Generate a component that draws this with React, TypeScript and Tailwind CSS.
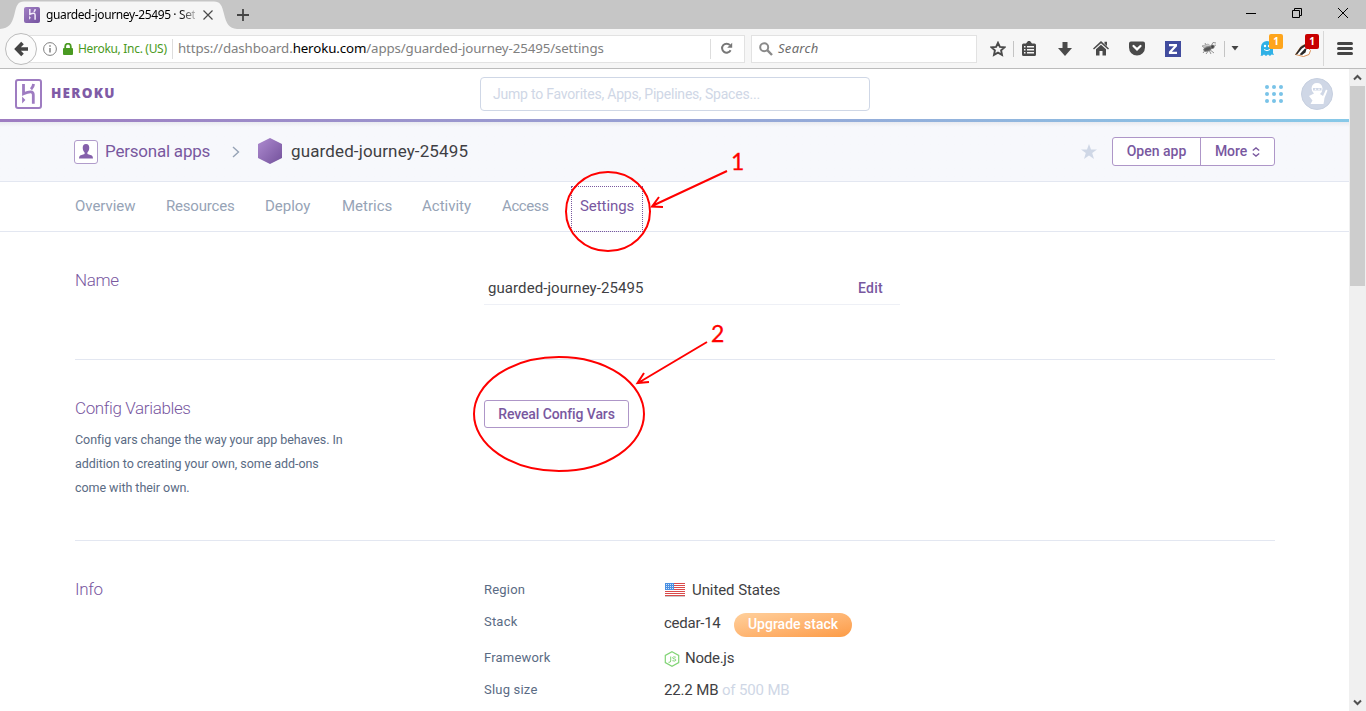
import React from "react";

const UI = "font-['Noto_Sans',sans-serif]";

function HerokuMark({ className = "", stroke = "#9e7cc1", framed = true }: { className?: string; stroke?: string; framed?: boolean }) {
  return (
    <svg viewBox={framed ? "0 0 27 30" : "4 3 19 24"} className={className} fill="none">
      {framed && <rect x="1" y="1" width="25" height="28" rx="2" stroke={stroke} strokeWidth="2" />}
      <path d="M8.500 5v9.800c3-1.300 5.300-2 7.300-1.900 2 .1 2.500 1.400 2.500 2.900V24.700M18.600 5c-.2 2.200-1.100 3.700-2.600 5.200" stroke={stroke} strokeWidth="2.800" />
      <path d="M7.100 17.500v7l3.300-3.500z" fill={stroke} />
    </svg>
  );
}

function TabStrip() {
  return (
    <div className={`relative flex h-[29px] bg-[#c6c6c6] ${UI}`}>
      <svg className="absolute left-0 top-0" width="240" height="29" viewBox="0 0 240 29">
        <path d="M0 29C9 28 12 24 14.500 14C16.500 5 18 1.500 24 1.500H214C220 1.500 222 5 224 14C226.500 24 229 28 237 29Z" fill="#f6f6f6" />
      </svg>
      <div className="relative flex h-full w-[232px] items-center pl-6">
        <div className="flex size-4 shrink-0 items-center justify-center rounded-[2px] bg-gradient-to-br from-[#a17fc3] to-[#7553a0]">
          <HerokuMark framed={false} className="h-[13px] w-[11px]" stroke="#f1e9f9" />
        </div>
        <div className="ml-[6px] w-[149px] whitespace-nowrap bg-gradient-to-r from-black from-88% to-[#bbb] bg-clip-text text-[12px] tracking-[-0.38px] text-transparent">
          guarded-journey-25495 · Set
        </div>
        <svg className="ml-[7px]" width="12" height="12" viewBox="0 0 12 12">
          <path d="M1.500 1.500l9 9M10.500 1.500l-9 9" stroke="#4a4a4a" strokeWidth="1.200" />
        </svg>
      </div>
      <svg className="relative mt-[9px] ml-[5px]" width="12" height="12" viewBox="0 0 12 12">
        <path d="M6 0v12M0 6h12" stroke="#444" strokeWidth="1.800" />
      </svg>
      <div className="ml-auto mr-[18px] flex items-center gap-[36px] pb-[3px]">
        <svg width="10" height="10"><path d="M0 5.500h10" stroke="#000" /></svg>
        <svg width="10" height="10" fill="none" stroke="#000"><path d="M.5 2.500h7v7h-7zM2.500 2.500v-2h7v7h-2" /></svg>
        <svg width="10" height="10" stroke="#000"><path d="M0 0l10 10M10 0L0 10" /></svg>
      </div>
    </div>
  );
}

function Cell({ children, w = "w-9" }: { children: React.ReactNode; w?: string }) {
  return <div className={`relative flex h-full shrink-0 items-center justify-center ${w}`}>{children}</div>;
}

function Toolbar() {
  return (
    <div className={`flex h-10 items-center border-b border-[#bcbcbc] bg-[#f6f6f6] ${UI}`}>
      <div className="z-10 ml-[5px] -mr-4 flex size-8 shrink-0 items-center justify-center rounded-full border border-[#bcbcbc] bg-[#fbfbfb]">
        <svg width="15" height="16" viewBox="0 0 15 16" fill="none" stroke="#444" strokeWidth="3.600">
          <path d="M14 8H3M8.500 2L2.700 8l5.800 6" />
        </svg>
      </div>
      <div className="flex h-7 w-[724px] shrink-0 items-center border border-[#e2e2e2] bg-white pl-[21px]">
        <svg width="14" height="14" viewBox="0 0 14 14" fill="none" stroke="#808080">
          <circle cx="7" cy="7" r="6.400" />
          <path d="M7 6v4.500M7 3.200v1.600" strokeWidth="1.500" />
        </svg>
        <svg className="ml-[6px]" width="10" height="12" viewBox="0 0 10 12">
          <path d="M2.200 6V3.500a2.800 2.800 0 015.600 0V6" fill="none" stroke="#4a9a22" strokeWidth="1.800" />
          <rect y="5" width="10" height="7" rx="1" fill="#4a9a22" />
        </svg>
        <span className="ml-[5px] w-[89px] whitespace-nowrap text-[12px] tracking-[-0.31px] text-[#4a9a22]">Heroku, Inc. (US)</span>
        <span className="ml-[5px] h-5 w-px bg-[#ddd]" />
        <span className="ml-[5px] whitespace-nowrap text-[13.300px] tracking-[-0.115px] text-[#808080]">
          https://dashboard.<span className="text-black">heroku.com</span>/apps/guarded-journey-25495/settings
        </span>
        <span className="ml-auto h-5 w-px bg-[#ddd]" />
        <svg className="ml-[9px] mr-[11px]" width="13" height="13" viewBox="0 0 13 13" fill="none">
          <path d="M10.600 8.200A4.500 4.500 0 1110 3.200" stroke="#777" strokeWidth="2" />
          <path d="M12.200.8v5H7.200z" fill="#777" />
        </svg>
      </div>
      <div className="ml-[6px] flex h-7 w-[226px] shrink-0 items-center border border-[#e2e2e2] bg-white pl-[7px]">
        <svg width="14" height="14" viewBox="0 0 14 14" fill="none" stroke="#8a8a8a">
          <circle cx="5.200" cy="5.200" r="4" strokeWidth="2" />
          <path d="M8.200 8.200l4.800 4.800" strokeWidth="2.400" />
        </svg>
        <span className="ml-[5px] mt-px text-[13px] italic tracking-[0.300px] text-[#6c6c6c]">Search</span>
      </div>
      <Cell w="ml-[3px] w-9">
        <svg width="16" height="16" viewBox="0 0 16 16" fill="none" stroke="#4a4a4a" strokeWidth="1.900">
          <path d="M8 1.800l1.900 4.100 4.500.5-3.300 3 .9 4.500L8 11.700l-4 2.200.9-4.500-3.300-3 4.500-.5z" />
        </svg>
        <span className="absolute right-[2px] h-4 w-px bg-[#c4c4c4]" />
      </Cell>
      <div className="-ml-[5px] flex h-full">
        <Cell>
          <svg width="14" height="15" viewBox="0 0 14 15" fill="#4a4a4a">
            <path fillRule="evenodd" d="M4 2.500L6 0h2l2 2.500h2.500A1.500 1.500 0 0114 4v9.500a1.500 1.500 0 01-1.500 1.500h-11A1.500 1.500 0 010 13.500V4a1.500 1.500 0 011.500-1.500zM2 5v1.500h1.500V5zm3 0v1.500h7V5zM2 8v1.500h1.500V8zm3 0v1.500h7V8zM2 11v1.500h1.500V11zm3 0v1.500h7V11z" />
          </svg>
        </Cell>
        <Cell><svg width="14" height="14" viewBox="0 0 14 14" fill="#4a4a4a"><path d="M4.500 0h5v6H14l-7 8-7-8h4.500z" /></svg></Cell>
        <Cell><svg width="16" height="15" viewBox="0 0 16 15" fill="#4a4a4a"><path d="M8 0l8 7.500-1 1L8 2.200 1 8.500l-1-1zM8 3.700l5 4.600V14.500H9.500V10h-3v4.500H3V8.300zM11.500.8H14V5l-2.500-2.300z" /></svg></Cell>
        <Cell><svg width="16" height="15" viewBox="0 0 16 15"><path d="M2 .5h12a2 2 0 012 2V6.500a8 8 0 01-16 0v-4a2 2 0 012-2z" fill="#4a4a4a" /><path d="M4.500 5L8 8.400 11.500 5" fill="none" stroke="#fff" strokeWidth="2.200" strokeLinecap="round" /></svg></Cell>
        <Cell><svg width="16" height="16" viewBox="0 0 16 16"><path fill="#414c9e" d="M0 0h16v16H0z" /><path d="M4 3h8v2.300L6.900 10.800H12V13H3.900v-2.300L9 5.200H4z" fill="#fff" /></svg></Cell>
        <Cell>
          <svg width="16" height="13" viewBox="0 0 16 13" fill="none" stroke="#777" strokeWidth=".8">
            <path d="M2 11l3-4-4-3M5 12l3-4 2 4M8 7l5 4M6 5L4 1M10 4l2-3.500 3 .5" />
            <path d="M1 4l6-2 4 3zM9 4l6-1-5 4z" fill="#ccc" stroke="#aaa" />
            <ellipse cx="6.500" cy="7" rx="4" ry="2" fill="#555" transform="rotate(-18 6.500 7)" />
            <circle cx="11.500" cy="4.800" r="1.700" fill="#444" />
          </svg>
          <span className="absolute right-[2px] h-4 w-px bg-[#c4c4c4]" />
        </Cell>
        <Cell w="w-4"><svg width="8" height="5"><path d="M.5 0h7L4 4.500z" fill="#444" /></svg></Cell>
        <Cell w="w-12">
          <svg className="-ml-px" width="14" height="15" viewBox="0 0 14 15"><path d="M1 14V6a6 6 0 0112 0v6l1 2-2.500-.5L10 15l-2-1.500L6 15l-2-1.500L2 15l-2-1z" fill="#2fb1e6" /><circle cx="5" cy="5" r="1.200" fill="#fff" /><circle cx="9" cy="5" r="1.200" fill="#fff" /><path d="M4 8.500q3 2.500 6 0" fill="none" stroke="#fff" /></svg>
          <span className="absolute left-[26px] top-[5px] flex h-[15px] w-[14px] items-center justify-center rounded-[2px] bg-[#fea51c] text-[10px] font-bold text-white">1</span>
        </Cell>
        <Cell w="w-8">
          <svg className="-ml-2 mt-1" width="16" height="13" viewBox="0 0 16 13">
            <path d="M.5 10.500L6 2.500 10 .5l5.500 6-1.500 4-5.500 2z" fill="#fff" stroke="#d98f55" />
            <path d="M0 11L5.500 3 9.500.5 11 2 7 4.500 2.500 10zM4.500 10.500L10 4.500l1.500.5-1 3.500-3.500 2.500z" fill="#292929" />
          </svg>
          <span className="absolute left-[14px] top-[5px] flex h-[15px] w-[14px] items-center justify-center rounded-[2px] bg-[#c80000] text-[10px] font-bold text-white">1</span>
        </Cell>
        <div className="my-[2px] w-px bg-[#d8d8d8]" />
        <Cell w="w-[42px]"><div className="flex flex-col gap-[2px]"><i className="h-[3px] w-4 rounded bg-[#444]" /><i className="h-[3px] w-4 rounded bg-[#444]" /><i className="h-[3px] w-4 rounded bg-[#444]" /></div></Cell>
      </div>
    </div>
  );
}

function Header() {
  return (
    <>
      <header className="flex h-[50px] items-center">
        <HerokuMark className="ml-[15px] h-[30px] w-[27px]" />
        <span className="ml-[9px] w-[429px] font-['Open_Sans',sans-serif] text-[13.500px] font-extrabold leading-none tracking-[1.250px] text-[#7f5ba6]">HEROKU</span>
        <div className="flex h-[34px] w-[390px] items-center rounded-[4px] border border-[#cfd7e6] pl-[12px] text-[14px] tracking-[-0.210px] text-[#cfd7e6]">
          Jump to Favorites, Apps, Pipelines, Spaces...
        </div>
        <div className="ml-auto mr-[16px] flex items-center gap-[18px]">
          <svg width="18" height="18" viewBox="0 0 18 18" fill="#79c3e8">
            {[2, 9, 16].map((y) => [2, 9, 16].map((x) => <circle key={`${x}${y}`} cx={x} cy={y} r="2" />))}
          </svg>
          <svg width="32" height="32" viewBox="0 0 32 32">
            <circle cx="16" cy="16" r="15.500" fill="#cfd7e6" stroke="#c6cfdf" />
            <path d="M10.500 10.500Q11 5 16 5t5.500 5.500q0 3.500-2.500 5.500l3 2 3-6.500 1.500 1-3 7.500-1 6H9.500l2-3.500-3.500-4.500 5-2.500q-2.500-2-2.500-5.500z" fill="#fff" />
            <path d="M12 10h8.500v2.500H12z" fill="#cfd7e6" /><circle cx="14.500" cy="11.200" r=".8" fill="#fff" /><circle cx="18" cy="11.200" r=".8" fill="#fff" />
          </svg>
        </div>
      </header>
      <div className="h-[3px] bg-gradient-to-r from-[#9e7cc1] to-[#87c9e8]" />
    </>
  );
}

function AppBar() {
  return (
    <div className="bg-gradient-to-b from-[#e9eaef] to-[#f7f8fc] to-[5px] flex h-[60px] items-center border-b border-[#e3e7f1] pl-[74px] pr-[74px]">
      <div className="flex size-6 items-center justify-center rounded-[3px] border border-[#b19ccb] bg-white">
        <svg width="14" height="15" viewBox="0 0 15 16" fill="#8560ab"><path d="M7.500 0C10 0 11 1.600 11 4c0 2.400-.8 4-2 5v1.600l4.800 1.600Q15 13 15 15.500H0Q0 13 1.200 12.200L6 10.600V9C4.800 8 4 6.400 4 4c0-2.400 1-4 3.500-4z" /></svg>
      </div>
      <span className="ml-[7px] w-[106px] whitespace-nowrap text-[17px] tracking-[-0.220px] text-[#79589f]">Personal apps</span>
      <svg className="ml-[21px]" width="8" height="12" viewBox="0 0 8 12" fill="none"><path d="M1 1l5.500 5L1 11" stroke="#96a3b6" strokeWidth="1.400" /></svg>
      <svg className="ml-[18px] -mt-px" width="24" height="26" viewBox="0 0 24 26"><defs><linearGradient id="hex" x2="1" y2="1"><stop stopColor="#ae8bd0" /><stop offset="1" stopColor="#73519b" /></linearGradient></defs><path d="M12 0l12 6v14l-12 6L0 20V6z" fill="url(#hex)" /></svg>
      <span className="ml-[9px] whitespace-nowrap text-[17px] tracking-[0.130px] text-[#3f3f44]">guarded-journey-25495</span>
      <svg className="ml-auto mr-[15px]" width="16" height="15" viewBox="0 0 16 15"><path d="M8 0l2 5.500h6l-4.800 3.500L13 15l-5-3.600L3 15l1.800-6L0 5.500h6z" fill="#cfd7e6" /></svg>
      <div className="flex h-[29px] rounded-[3px] border border-[#ae96c8] bg-white text-[14px] font-medium text-[#79589f]">
        <div className="flex w-[88px] items-center justify-center border-r border-[#ae96c8]">Open app</div>
        <div className="flex w-[73px] items-center justify-center gap-[5px] tracking-[-0.100px]">
          More
          <svg width="8" height="10" viewBox="0 0 8 10" fill="none" stroke="#79589f" strokeWidth="1.300"><path d="M.8 3.600L4 .9l3.200 2.700M.8 6.400L4 9.100l3.200-2.700" /></svg>
        </div>
      </div>
    </div>
  );
}

function Tabs() {
  const tabs: [string, string][] = [
    ["Overview", "w-[91px] tracking-[-0.050px]"], ["Resources", "w-[99px] tracking-[-0.200px]"], ["Deploy", "w-[77px]"],
    ["Metrics", "w-[80px]"], ["Activity", "w-[80px]"], ["Access", "w-[69px] tracking-[-0.400px]"],
  ];
  return (
    <nav className="flex h-[50px] border-b border-[#e3e7f1] pl-[75px] text-[15px] leading-[48px] text-[#96a3b6]">
      {tabs.map(([t, w]) => <a key={t} className={w}>{t}</a>)}
      <a className="mt-1 h-[46px] w-[72px] border border-dotted border-[#79589f] pl-2 leading-[38px] tracking-[-0.070px] text-[#79589f]">Settings</a>
    </nav>
  );
}

function Flag() {
  return (
    <svg width="20" height="14" viewBox="0 0 20 14">
      <path fill="#fff" d="M0 0h20v14H0z" />
      {[0, 2, 4, 6, 8, 10, 12].map((y) => <rect key={y} y={y} width="20" height="1" fill="#d94a4a" />)}
      <path d="M0 13.500h20" stroke="#ccc" />
      <path fill="#4a90e2" d="M0 0h9v7H0z" />
      {[1.500, 3.500, 5.500].map((y) => [1.500, 3.500, 5.500, 7.500].map((x) => <circle key={`${x}-${y}`} cx={x} cy={y} r=".5" fill="#fff" />))}
    </svg>
  );
}

function Settings() {
  const title = "text-[17px] font-[350] leading-6 text-[#79589f]";
  const label = "w-[180px] text-[13px] tracking-[0.200px] text-[#5a6b84]";
  return (
    <main className="ml-[75px] w-[1200px]">
      <section className="flex h-[128px] border-b border-[#e3e7f1]">
        <h2 className={`mt-9 w-[409px] tracking-[-0.300px] ${title}`}>Name</h2>
        <div className="mt-10 flex h-[33px] w-[416px] items-center justify-between border-b border-[#eef0f6] pl-1 pr-[17px] text-[15px] text-[#3f3f44]">
          <span className="tracking-[0.080px]">guarded-journey-25495</span>
          <span className="text-[14px] font-medium tracking-[0.250px] text-[#79589f]">Edit</span>
        </div>
      </section>
      <section className="flex h-[181px] border-b border-[#e3e7f1]">
        <div className="w-[409px] pt-9">
          <h2 className={`tracking-[-0.370px] ${title}`}>Config Variables</h2>
          <p className="mt-2 whitespace-nowrap text-[12.500px] leading-6 tracking-[-0.050px] text-[#5a6b84]">
            Config vars change the way your app behaves. In<br />addition to creating your own, some add-ons<br />come with their own.
          </p>
        </div>
        <button className="mt-10 h-[28px] w-[145px] rounded-[3px] border border-[#ae96c8] text-[14px] font-medium tracking-[-0.100px] text-[#79589f]">Reveal Config Vars</button>
      </section>
      <section className="flex">
        <h2 className={`mt-9 w-[409px] tracking-[-0.300px] ${title}`}>Info</h2>
        <dl className="pt-[33px] text-[15px] text-[#3f3f44]">
          <div className="flex h-8 items-center"><dt className={label}>Region</dt><dd className="ml-px flex items-center gap-[7px] tracking-[-0.080px]"><Flag />United States</dd></div>
          <div className="flex h-8 items-center"><dt className={label}>Stack</dt><dd className="flex items-center pt-[5px]"><span className="-mt-[2px] w-[70px] tracking-[-0.250px]">cedar-14</span><span className="flex h-6 w-[118px] items-center justify-center rounded-full bg-gradient-to-br from-[#ffd09c] to-[#fc9b45] text-[14px] font-medium text-white">Upgrade stack</span></dd></div>
          <div className="mt-[4px] flex h-8 items-center"><dt className={label}>Framework</dt><dd className="flex items-center gap-[5px] tracking-[-0.250px]">
            <svg className="mt-px" width="16" height="16" viewBox="0 0 16 16" fill="none" stroke="#82d476"><path d="M8 .7l6.700 3.700v7.200L8 15.300 1.300 11.600V4.400z" strokeWidth="1.200" /><path d="M6.700 5.500V10q0 1.600-2.200 1.300M11.800 6.200Q8.700 5.200 8.600 6.700q0 1 1.700 1.200 1.800.3 1.600 1.400-.4 1.300-3.500.4" /></svg>
            Node.js</dd></div>
          <div className="flex h-8 items-center"><dt className={label}>Slug size</dt><dd className="tracking-[-0.150px]">22.2 MB <span className="text-[#cfd7e6]">of 500 MB</span></dd></div>
        </dl>
      </section>
    </main>
  );
}

function Scrollbar() {
  return (
    <div className="flex w-[17px] shrink-0 flex-col items-center bg-[#f0f0f0]">
      <svg className="my-[5px]" width="9" height="7" viewBox="0 0 9 7" fill="none"><path d="M1 5.500L4.500 2 8 5.500" stroke="#505050" strokeWidth="2" /></svg>
      <div className="h-[200px] w-[15px] bg-[#cdcdcd]" />
      <svg className="mt-auto mb-[5px]" width="9" height="7" viewBox="0 0 9 7" fill="none"><path d="M1 1.500L4.500 5 8 1.500" stroke="#505050" strokeWidth="2" /></svg>
    </div>
  );
}

function Annotations() {
  return (
    <svg className="pointer-events-none absolute inset-0" width="1366" height="711" fill="none" stroke="#f00" strokeWidth="2">
      <ellipse cx="608" cy="211.500" rx="42" ry="39.500" />
      <path d="M727 171L652 206M659 197l-7 9.500 11 .5" />
      <ellipse cx="559" cy="414" rx="85" ry="57" />
      <path d="M707 342L638 383M644 373l-6.500 10 11.500-1" />
      <g fill="#f00" stroke="#f00" strokeWidth=".3" className="font-['Lato',sans-serif] text-[23px]">
        <text x="731" y="170">1</text>
        <text x="711" y="342">2</text>
      </g>
    </svg>
  );
}

export default function App() {
  return (
    <div className="relative flex h-[711px] w-[1366px] flex-col overflow-hidden bg-white">
      <TabStrip />
      <Toolbar />
      <div className="flex min-h-0 flex-1">
        <div className="w-[1349px] shrink-0 overflow-hidden font-['Roboto',sans-serif]">
          <Header />
          <AppBar />
          <Tabs />
          <Settings />
        </div>
        <Scrollbar />
      </div>
      <Annotations />
    </div>
  );
}
